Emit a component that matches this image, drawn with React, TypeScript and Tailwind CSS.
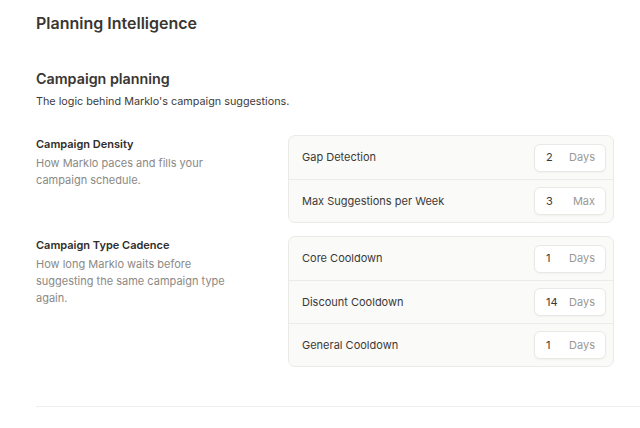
import React from "react";

const font = { fontFamily: "Inter, 'Noto Sans', 'Liberation Sans', sans-serif" };

function Row({ label, value, unit, first }: { label: string; value: string; unit: string; first?: boolean }) {
  return (
    <div className={`flex h-[43px] items-center justify-between pl-[13px] pr-[7px] ${first ? "" : "border-t border-[#ecebe8]"}`}>
      <span className="text-[11px] text-[#3b3936]">{label}</span>
      <div className="flex h-[28px] w-[72px] items-center justify-between rounded-[6px] border border-[#e9e8e5] bg-white pl-[11px] pr-[10px] shadow-[0_1px_2px_rgba(0,0,0,0.04)]">
        <span className="text-[11px] text-[#3b3936]">{value}</span>
        <span className="text-[11px] text-[#9a9894]">{unit}</span>
      </div>
    </div>
  );
}

function Section({ title, desc, rows }: { title: string; desc: string; rows: { label: string; value: string; unit: string }[] }) {
  return (
    <div className="flex">
      <div className="w-[252px] shrink-0 pt-[2px]">
        <div className="text-[11px] font-semibold leading-[14px] text-[#2f2d2a]">{title}</div>
        <div className="mt-[4px] w-[205px] text-[11px] leading-[17px] text-[#8c8985]">{desc}</div>
      </div>
      <div className="w-[326px] overflow-hidden rounded-[7px] border border-[#ebeae7] bg-[#fafaf9]">
        {rows.map((r, i) => (
          <Row key={r.label} {...r} first={i === 0} />
        ))}
      </div>
    </div>
  );
}

export default function App() {
  return (
    <div className="h-[428px] w-[640px] overflow-hidden bg-white pl-[36px] pt-[13px]" style={font}>
      <h1 className="text-[16px] font-semibold leading-[20px] text-[#3a3632]">Planning Intelligence</h1>
      <h2 className="mt-[37px] text-[14.3px] font-semibold leading-[18px] text-[#3a3632]">Campaign planning</h2>
      <p className="mt-[7px] text-[10.8px] leading-[14px] text-[#3d3b38]">The logic behind Marklo's campaign suggestions.</p>
      <div className="mt-[26px] flex flex-col gap-[13px]">
        <Section
          title="Campaign Density"
          desc="How Marklo paces and fills your campaign schedule."
          rows={[
            { label: "Gap Detection", value: "2", unit: "Days" },
            { label: "Max Suggestions per Week", value: "3", unit: "Max" },
          ]}
        />
        <Section
          title="Campaign Type Cadence"
          desc="How long Marklo waits before suggesting the same campaign type again."
          rows={[
            { label: "Core Cooldown", value: "1", unit: "Days" },
            { label: "Discount Cooldown", value: "14", unit: "Days" },
            { label: "General Cooldown", value: "1", unit: "Days" },
          ]}
        />
      </div>
      <div className="mt-[39px] h-px bg-[#efeeec]" />
    </div>
  );
}
